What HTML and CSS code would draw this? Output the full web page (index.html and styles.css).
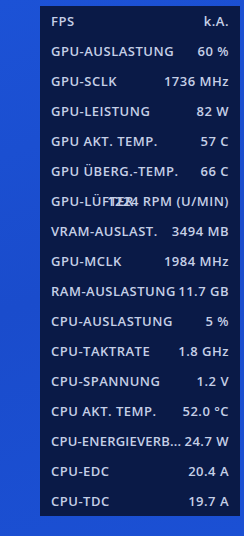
FILE: index.html
```html
<!DOCTYPE html>
<html lang="de">
<head>
<meta charset="utf-8">
<link rel="stylesheet" href="styles.css">
</head>
<body>
<div class="panel">
  <div class="row"><span class="label">FPS</span><span class="value">k.A.</span></div>
  <div class="row"><span class="label">GPU-AUSLASTUNG</span><span class="value">60 %</span></div>
  <div class="row"><span class="label">GPU-SCLK</span><span class="value">1736 MHz</span></div>
  <div class="row"><span class="label">GPU-LEISTUNG</span><span class="value">82 W</span></div>
  <div class="row"><span class="label">GPU AKT. TEMP.</span><span class="value">57 C</span></div>
  <div class="row"><span class="label">GPU ÜBERG.-TEMP.</span><span class="value">66 C</span></div>
  <div class="row"><span class="label">GPU-LÜFTER</span><span class="value">1224 RPM (U/MIN)</span></div>
  <div class="row"><span class="label">VRAM-AUSLAST.</span><span class="value">3494 MB</span></div>
  <div class="row"><span class="label">GPU-MCLK</span><span class="value">1984 MHz</span></div>
  <div class="row"><span class="label">RAM-AUSLASTUNG</span><span class="value">11.7 GB</span></div>
  <div class="row"><span class="label">CPU-AUSLASTUNG</span><span class="value">5 %</span></div>
  <div class="row"><span class="label">CPU-TAKTRATE</span><span class="value">1.8 GHz</span></div>
  <div class="row"><span class="label">CPU-SPANNUNG</span><span class="value">1.2 V</span></div>
  <div class="row"><span class="label">CPU AKT. TEMP.</span><span class="value">52.0 °C</span></div>
  <div class="row"><span class="label label-trunc">CPU-ENERGIEVERB...</span><span class="value">24.7 W</span></div>
  <div class="row"><span class="label">CPU-EDC</span><span class="value">20.4 A</span></div>
  <div class="row"><span class="label">CPU-TDC</span><span class="value">19.7 A</span></div>
</div>
</body>
</html>
```
FILE: styles.css
```css
html, body {
  margin: 0;
  padding: 0;
}
body {
  width: 244px;
  height: 536px;
  background: linear-gradient(160deg, #1c52d6 0%, #1a4ccc 50%, #1b50d4 100%);
  font-family: "Open Sans", "Noto Sans", sans-serif;
  overflow: hidden;
}
.panel {
  margin: 6px 0 0 40px;
  width: 200px;
  background: #0a1a47;
  padding: 0 11px;
  box-sizing: border-box;
}
.row {
  height: 30px;
  display: grid;
  grid-template-columns: 1fr;
  align-items: center;
  color: #c5cfe6;
  font-size: 13px;
  letter-spacing: 0.5px;
  font-weight: 600;
  white-space: nowrap;
}
.label, .value {
  grid-area: 1 / 1;
}
.label {
  justify-self: start;
}
.value {
  justify-self: end;
}
.label-trunc {
  letter-spacing: 0.2px;
}
```
